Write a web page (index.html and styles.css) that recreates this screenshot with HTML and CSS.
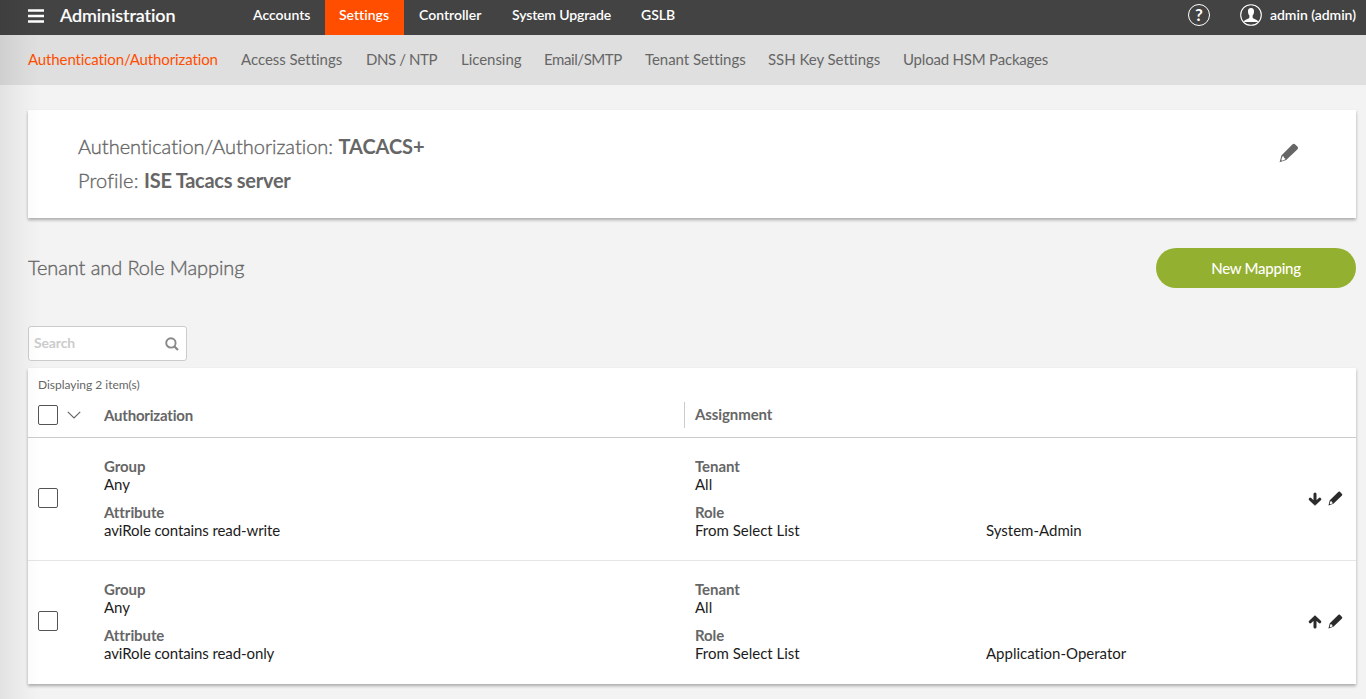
FILE: index.html
```html
<!DOCTYPE html>
<html lang="en">
<head>
<meta charset="utf-8">
<title>Administration</title>
<link rel="stylesheet" href="styles.css">
</head>
<body>
<svg class="sprite" aria-hidden="true">
  <symbol id="pencil" viewBox="0 0 20 20">
    <path d="M13.3 1.600 C14.400.5 15.200.5 16.200 1.400 L18.400 3.600 C19.300 4.600 19.300 5.400 18.300 6.400 L7.200 17 L.6 19.200 L2.400 12.400 Z" fill="currentColor"/>
    <path d="M3.300 13.600 L4.700 13.300 L5 15 L6.500 15.600 L6 16.500 L3 17.700 L2.300 17 Z" fill="#fff"/>
  </symbol>
  <symbol id="arrow" viewBox="0 0 14 14">
    <path d="M7 2v9.600M2.200 7.200 7 11.600l4.800-4.400" fill="none" stroke="currentColor" stroke-width="3" stroke-linecap="round" stroke-linejoin="miter"/>
  </symbol>
</svg>

<header class="topbar">
  <svg class="menu-icon" viewBox="0 0 16 14"><path d="M0 1.500h16M0 7h16M0 12.500h16" stroke="#fff" stroke-width="2.400"/></svg>
  <h1 class="brand">Administration</h1>
  <nav class="tabs">
    <a class="tab">Accounts</a>
    <a class="tab tab-active">Settings</a>
    <a class="tab">Controller</a>
    <a class="tab tab-upgrade">System Upgrade</a>
    <a class="tab">GSLB</a>
  </nav>
  <div class="account">
    <span class="help">?</span>
    <svg class="avatar" viewBox="0 0 22 22"><circle cx="11" cy="11" r="10.300" fill="none" stroke="#fff" stroke-width="1.100"/><path d="M11 4C8.700 4 7.900 5.300 8 7.200c0 2.300.6 3.300 1.400 4.200v2C8.900 14.800 5.500 15.200 4 17.200v.8h14v-.8c-1.500-2-4.900-2.400-5.400-3.800v-2c.8-.9 1.400-1.900 1.400-4.200.1-1.900-.7-3.200-3-3.200z" fill="#fff"/></svg>
    <span class="user">admin (admin)</span>
  </div>
</header>

<nav class="subnav">
  <a class="sub sub-active">Authentication/Authorization</a>
  <a class="sub">Access Settings</a>
  <a class="sub sub-tight">DNS / NTP</a>
  <a class="sub">Licensing</a>
  <a class="sub sub-tight">Email/SMTP</a>
  <a class="sub">Tenant Settings</a>
  <a class="sub">SSH Key Settings</a>
  <a class="sub sub-upload">Upload HSM Packages</a>
</nav>

<main class="content">
  <section class="card profile">
    <div class="profile-text">
      <p class="line">Authentication/Authorization: <b>TACACS+</b></p>
      <p class="line line-profile">Profile: <b>ISE Tacacs server</b></p>
    </div>
    <svg class="edit"><use href="#pencil"/></svg>
  </section>

  <div class="heading">
    <h2 class="title">Tenant and Role Mapping</h2>
    <button class="new">New Mapping</button>
  </div>

  <div class="search">
    <span class="placeholder">Search</span>
    <svg class="glass" viewBox="0 0 14 14"><circle cx="5.900" cy="5.900" r="4.700" fill="none" stroke="#888" stroke-width="1.900"/><path d="M9.200 9.200 13 13" stroke="#888" stroke-width="2.200"/></svg>
  </div>

  <section class="card table">
    <p class="count">Displaying 2 item(s)</p>
    <div class="row head">
      <div class="select"><span class="box"></span><svg class="chevron" viewBox="0 0 14 8"><path d="M.8.8 7 7 13.200.8" fill="none" stroke="#666" stroke-width="1.200"/></svg></div>
      <div class="th">Authorization</div>
      <div class="th th-assign">Assignment</div>
    </div>
    <div class="row item">
      <div class="select"><span class="box"></span></div>
      <dl class="cell"><dt>Group</dt><dd>Any</dd><dt>Attribute</dt><dd class="rule">aviRole contains read-write</dd></dl>
      <dl class="cell"><dt>Tenant</dt><dd>All</dd><dt>Role</dt><dd>From Select List</dd></dl>
      <div class="role">System-Admin</div>
      <div class="actions"><svg class="arrow"><use href="#arrow"/></svg><svg class="pen"><use href="#pencil"/></svg></div>
    </div>
    <div class="row item">
      <div class="select"><span class="box"></span></div>
      <dl class="cell"><dt>Group</dt><dd>Any</dd><dt>Attribute</dt><dd class="rule">aviRole contains read-only</dd></dl>
      <dl class="cell"><dt>Tenant</dt><dd>All</dd><dt>Role</dt><dd>From Select List</dd></dl>
      <div class="role">Application-Operator</div>
      <div class="actions"><svg class="arrow arrow-up"><use href="#arrow"/></svg><svg class="pen"><use href="#pencil"/></svg></div>
    </div>
  </section>
</main>
<div class="edge-shade"></div>
</body>
</html>
```
FILE: styles.css
```css
* { box-sizing: border-box; margin: 0; padding: 0; }
body { height: 699px; overflow: hidden; background: #f3f3f3; color: #666; font-family: Lato, "Open Sans", sans-serif; font-size: 15px; line-height: 18px; white-space: nowrap; font-variant-ligatures: none; }
.sprite { display: none; }

.topbar { display: flex; height: 35px; background: #434343; color: #fff; padding: 0 10px 0 28px; }
.menu-icon { width: 16px; height: 14px; margin-top: 9px; }
.brand { width: 194px; padding-left: 16px; font-size: 18px; font-weight: 500; line-height: 30px; letter-spacing: -.1px; -webkit-text-stroke: .2px #fff; }
.tabs { display: grid; grid-template-columns: 87px 79px 93px 129px 64px; }
.tab { padding-left: 15px; font-size: 14px; font-weight: 600; line-height: 29px; }
.tab-active { padding-left: 14px; background: #ff4e00; }
.tab-upgrade { letter-spacing: -.14px; }
.account { display: flex; margin-left: auto; font-size: 14px; font-weight: 600; line-height: 29px; }
.help { width: 22px; height: 22px; margin: 4px 30px 0 0; border: 1px solid #fff; border-radius: 50%; text-align: center; font-size: 17px; font-weight: 700; line-height: 20px; }
.avatar { width: 22px; height: 22px; margin: 4px 8px 0 0; }
.user { width: 86px; letter-spacing: -.03px; }

.subnav { display: grid; grid-template-columns: 213px 125px 95px 83px 101px 123px 135px auto; height: 50px; padding-left: 28px; background: #dfdfdf; line-height: 49px; }
.sub { letter-spacing: -.04px; }
.sub-active { color: #ff4e00; letter-spacing: -.12px; }
.sub-tight { letter-spacing: -.42px; }
.sub-upload { letter-spacing: -.2px; }

.content { padding: 25px 10px 0 28px; }
.card { background: #fff; box-shadow: 0 2px 3px rgba(0, 0, 0, .3); }
.profile { display: flex; justify-content: space-between; height: 108px; padding: 19px 57px 0 50px; font-size: 20px; font-weight: 300; line-height: 34px; }
.line, .title { -webkit-text-stroke: .35px #666; }
.line { letter-spacing: -.01px; }
.line b { font-weight: 700; letter-spacing: -.1px; -webkit-text-stroke: 0; }
.line-profile { letter-spacing: .1px; }
.line-profile b { letter-spacing: -.27px; }
.edit { width: 20px; height: 20px; margin-top: 14px; }

.heading { display: flex; justify-content: space-between; align-items: center; height: 40px; margin-top: 30px; }
.title { padding-bottom: 2px; font-size: 20px; font-weight: 300; letter-spacing: -.1px; }
.new { width: 200px; height: 40px; border: 0; border-radius: 20px; background: #94b030; color: #fff; font: 500 15px Lato, sans-serif; letter-spacing: -.26px; }

.search { display: flex; justify-content: space-between; align-items: center; width: 159px; height: 35px; margin-top: 38px; padding: 0 7px 0 5px; border: 1px solid #ccc; border-radius: 3px; background: #fff; }
.placeholder { padding-bottom: 2px; color: #ccc; font-size: 14px; font-weight: 700; letter-spacing: -.15px; }
.glass { width: 14px; height: 14px; }

.table { height: 316px; margin-top: 7px; }
.count { height: 25px; padding: 8px 0 0 10px; font-size: 12px; letter-spacing: -.02px; }
.row { display: grid; grid-template-columns: 66px 591px 291px 322px auto; padding-left: 10px; }
.head { height: 45px; border-bottom: 1px solid #ccc; grid-template-columns: 66px 580px auto; align-items: center; font-weight: 700; }
.th { padding-bottom: 1px; letter-spacing: -.2px; }
.th-assign { height: 26px; padding: 0 0 0 10px; border-left: 1px solid #ccc; line-height: 25px; letter-spacing: -.1px; }
.select { display: flex; align-items: center; gap: 9px; }
.box { width: 20px; height: 20px; border: 1px solid #555; border-radius: 2px; background: #fff; }
.chevron { width: 14px; height: 8px; }
.item { height: 122px; }
.item .select { padding-bottom: 2px; }
.item + .item { height: 123px; border-top: 1px solid #e5e5e5; }
.cell { padding-top: 19px; }
.cell dt { font-weight: 700; letter-spacing: -.08px; }
.cell dd { margin-bottom: 10px; color: #1c1c1c; }
.cell .rule { letter-spacing: -.1px; }
.role { padding-top: 83px; color: #1c1c1c; }
.actions { display: flex; align-items: center; gap: 6px; padding-bottom: 1px; color: #2b2b2b; }
.arrow { width: 14px; height: 14px; }
.arrow-up { transform: rotate(180deg); }
.pen { width: 15px; height: 15px; }

/* soft shade along the left edge, over every panel */
.edge-shade { position: absolute; top: 0; left: 0; width: 40px; height: 699px; pointer-events: none; background: linear-gradient(90deg, rgba(0, 0, 0, .07), rgba(0, 0, 0, .02) 65%, rgba(0, 0, 0, 0)); }
```
